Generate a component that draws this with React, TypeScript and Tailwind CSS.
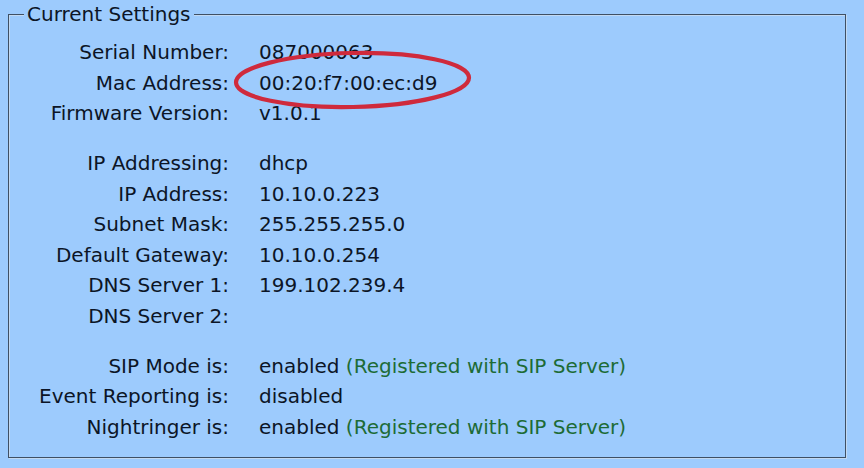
import React from "react";

type Row = { label?: string; value?: string; note?: string; blank?: boolean };

const rows: Row[] = [
  { label: "Serial Number:", value: "087000063" },
  { label: "Mac Address:", value: "00:20:f7:00:ec:d9" },
  { label: "Firmware Version:", value: "v1.0.1" },
  { blank: true },
  { label: "IP Addressing:", value: "dhcp" },
  { label: "IP Address:", value: "10.10.0.223" },
  { label: "Subnet Mask:", value: "255.255.255.0" },
  { label: "Default Gateway:", value: "10.10.0.254" },
  { label: "DNS Server 1:", value: "199.102.239.4" },
  { label: "DNS Server 2:", value: "" },
  { blank: true },
  { label: "SIP Mode is:", value: "enabled", note: "(Registered with SIP Server)" },
  { label: "Event Reporting is:", value: "disabled" },
  { label: "Nightringer is:", value: "enabled", note: "(Registered with SIP Server)" },
];

export default function App() {
  return (
    <div
      className="relative w-[864px] h-[468px] overflow-hidden bg-[#9dcbfd] pt-[3px] pl-[8px] text-[#0c1526]"
      style={{ fontFamily: '"DejaVu Sans", Verdana, sans-serif' }}
    >
      <fieldset className="m-0 w-[838px] h-[455px] border border-[#3f5064] px-[15px] pb-0 pt-[12px] shadow-[inset_1px_1px_0_#c2d9f2,1px_1px_0_#c2d9f2]">
        <legend className="px-[3px] text-[20px] leading-[22px] bg-[#9dcbfd]">Current Settings</legend>
        <div className="flex flex-col text-[20px]">
          {rows.map((r, i) =>
            r.blank ? (
              <div key={i} className="h-[19.5px]" />
            ) : (
              <div key={i} className="flex h-[30.5px] items-center">
                <div className="w-[205px] text-right whitespace-nowrap">{r.label}</div>
                <div className="ml-[30px] whitespace-nowrap">
                  {r.value}
                  {r.note ? <span className="text-[#1d6b36]"> {r.note}</span> : null}
                </div>
              </div>
            )
          )}
        </div>
      </fieldset>
      <svg
        className="absolute left-0 top-0 pointer-events-none"
        width="864"
        height="468"
        viewBox="0 0 864 468"
      >
        <ellipse
          cx="352.5"
          cy="80"
          rx="116.5"
          ry="27"
          fill="none"
          stroke="#cf2a3c"
          strokeWidth="4.2"
          transform="rotate(-1.2 352.5 80)"
        />
      </svg>
    </div>
  );
}
